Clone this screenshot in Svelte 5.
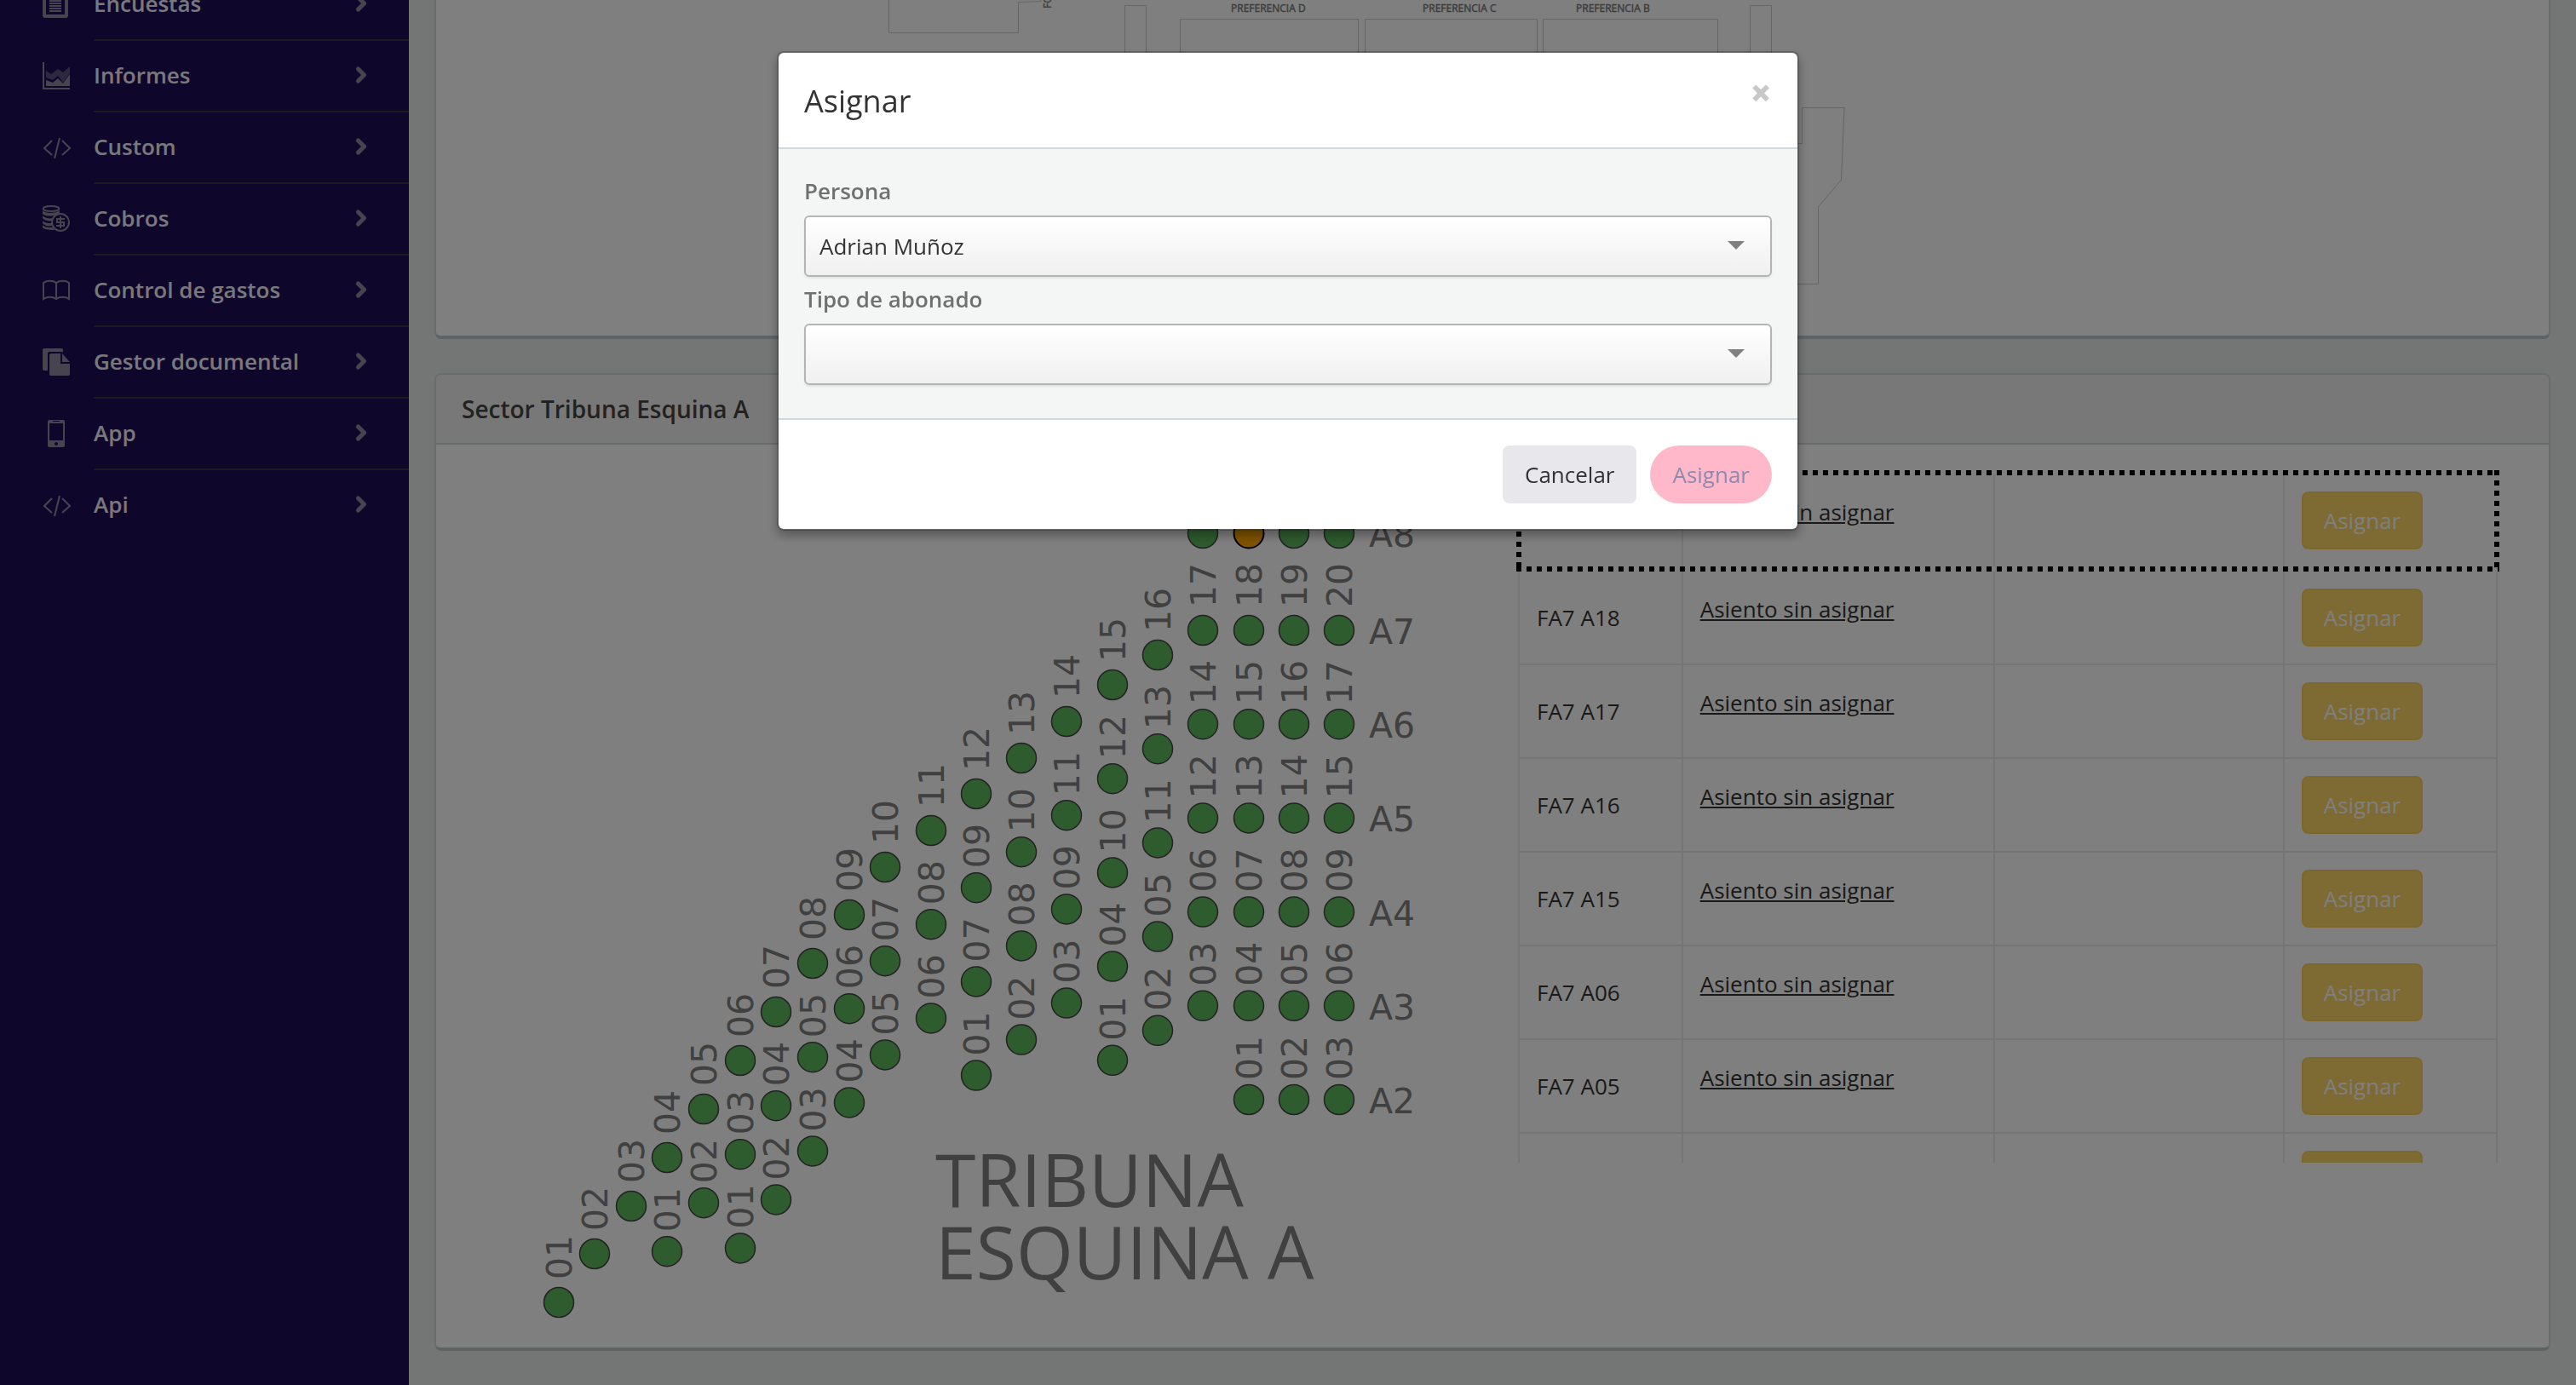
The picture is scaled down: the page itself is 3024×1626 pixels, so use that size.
<script lang="ts">
  const menu = [
    { label: "Encuestas", icon: "list" },
    { label: "Informes", icon: "chart" },
    { label: "Custom", icon: "code" },
    { label: "Cobros", icon: "coins" },
    { label: "Control de gastos", icon: "book" },
    { label: "Gestor documental", icon: "files" },
    { label: "App", icon: "phone" },
    { label: "Api", icon: "code" },
  ];

  // Each column of seats: x, y of its first seat and the numbers going down.
  const columns = [
    { x: 84, y: 977, seats: ["01"] },
    { x: 126, y: 920, seats: ["02"] },
    { x: 169, y: 864, seats: ["03"] },
    { x: 211, y: 807, seats: ["04", "01"] },
    { x: 254, y: 750, seats: ["05", "02"] },
    { x: 297, y: 693, seats: ["06", "03", "01"] },
    { x: 339, y: 636, seats: ["07", "04", "02"] },
    { x: 382, y: 579, seats: ["08", "05", "03"] },
    { x: 425, y: 522, seats: ["09", "06", "04"] },
    { x: 467, y: 466, seats: ["10", "07", "05"] },
    { x: 521, y: 423, seats: ["11", "08", "06"] },
    { x: 574, y: 380, seats: ["12", "09", "07", "01"] },
    { x: 627, y: 338, seats: ["13", "10", "08", "02"] },
    { x: 680, y: 295, seats: ["14", "11", "09", "03"] },
    { x: 734, y: 252, seats: ["15", "12", "10", "04", "01"] },
    { x: 787, y: 217, seats: ["16", "13", "11", "05", "02"] },
    { x: 840, y: 188, seats: ["17", "14", "12", "06", "03"] },
    { x: 894, y: 188, seats: ["18", "15", "13", "07", "04", "01"] },
    { x: 947, y: 188, seats: ["19", "16", "14", "08", "05", "02"] },
    { x: 1000, y: 188, seats: ["20", "17", "15", "09", "06", "03"] },
  ];
  const seatGap = 110.2;
  const lastRow = [840, 894, 947, 1000];
  const selectedX = 894;
  const rowNames = ["A7", "A6", "A5", "A4", "A3", "A2"];

  const rows = ["FA8 A04", "FA7 A18", "FA7 A17", "FA7 A16", "FA7 A15", "FA7 A06", "FA7 A05", "FA7 A04"];

  let isOpen = $state(true);
  let persona = $state("Adrian Muñoz");
  let tipo = $state("");
</script>

<div class="app">
  <nav class="sidebar">
    {#each menu as item}
      <a href="#top" class="menu-item">
        <svg class="icon" viewBox="0 0 32 32" aria-hidden="true">
          {#if item.icon === "list"}
            <rect x="2" y="2" width="26" height="28" rx="1" class="line thick" />
            <path d="M8 8h14M8 12h14M8 15h14M8 18h14M8 21h14M8 24h14" class="line" />
          {:else if item.icon === "chart"}
            <path d="M0 0h2v30h30v2H0z" />
            <path d="M4 10l6 4 8-6 6 4 8-7v8l-8 11-6-8-6 5-8-3z" opacity="0.55" />
            <path d="M4 21l8 3 6-5 6 6 8-11v14H4z" />
          {:else if item.icon === "code"}
            <path d="M11 8L2 17l9 8M23 8l9 9-9 8M20 5l-6 24" class="line" />
          {:else if item.icon === "coins"}
            <ellipse cx="10" cy="4" rx="9.3" ry="3" class="line" stroke-width="1.5" />
            <path d="M0 6c2 4 16 4 20 0v3c-4 4-16 5-20 1zM0 12c2 3 8 4 13 3l-1 3c-5 1-10 0-12-3zM0 18c2 3 7 3 11 3v3c-4 1-9 0-11-3zM0 23c2 3 7 3 12 3l2 3c-5 0-12 0-14-3z" />
            <circle cx="21" cy="20" r="10" class="line" />
            <path d="M26 16h-9v4h8v4h-9M21 13v14" class="line" />
          {:else if item.icon === "book"}
            <path d="M1 26V7c4-3 11-3 15 0 4-3 11-3 15 0v19c-4-3-11-3-15 0-4-3-11-3-15 0zM16 7v19" class="line" />
            <path d="M15 7h2v20h-2z" />
          {:else if item.icon === "files"}
            <path d="M2 0h20a2 2 0 0 1 2 2v2H8a2 2 0 0 0-2 2v20H2a2 2 0 0 1-2-2V2a2 2 0 0 1 2-2z" />
            <path d="M10 6h11v12h11v12a2 2 0 0 1-2 2H10a2 2 0 0 1-2-2V8a2 2 0 0 1 2-2z" />
            <path d="M23 6l9 10h-9z" />
          {:else}
            <path
              fill-rule="evenodd"
              d="M8 0h16a2 2 0 0 1 2 2v28a2 2 0 0 1-2 2H8a2 2 0 0 1-2-2V2a2 2 0 0 1 2-2zM8 4v20h16V4zM12 1v1h8V1zM16 26a2 2 0 1 0 .01 0z"
            />
          {/if}
        </svg>
        <span class="menu-label">{item.label}</span>
        <svg class="chevron" viewBox="0 0 14 20" aria-hidden="true">
          <path d="M4.500 3l7 7-7 7" />
        </svg>
      </a>
    {/each}
  </nav>

  <main class="content">
    <section class="panel stadium">
      <svg viewBox="0 0 2420 364" role="img" aria-label="Estadio">
        <g class="zone">
          <path d="M501.500 -4V38.500H653.500V2.500L680 1.500V-4" />
          <path d="M778.500 90V6.500H803.500V90" />
          <path d="M843.500 90V22.500H1052.500V90" />
          <path d="M1060.500 90V22.500H1262.500V90" />
          <path d="M1269.500 90V22.500H1474.500V90" />
          <path d="M1512.500 90V6.500H1537.500V90" />
          <path d="M1560 168.500H1573.500V126.500H1623L1619.500 211L1592.500 243V333.500H1560" />
        </g>
        <g class="zone-name">
          <text transform="translate(692 10) rotate(-90)">FONDO</text>
          <text x="903" y="14">PREFERENCIA D</text>
          <text x="1128" y="14">PREFERENCIA C</text>
          <text x="1308" y="14">PREFERENCIA B</text>
        </g>
      </svg>
    </section>

    <section class="panel">
      <h2 class="panel-heading">Sector Tribuna Esquina A</h2>
      <div class="panel-body">
        <div class="col">
          <svg viewBox="-2 0 1154 1000" role="img" aria-label="Tribuna Esquina A">
            {#each lastRow as x}
              <circle class="seat" class:selected={x === selectedX} cx={x} cy="74" r="17.5" />
            {/each}
            <text class="seat-row" x="1035" y="90">A8</text>
            {#each rowNames as name, i}
              <text class="seat-row" x="1035" y={204 + i * seatGap}>{name}</text>
            {/each}
            {#each columns as column}
              {#each column.seats as seat, i}
                {@const y = column.y + i * seatGap}
                <circle class="seat" cx={column.x} cy={y} r="17.5" />
                <text
                  class="seat-number"
                  transform="translate({column.x + 15} {y - (i === 0 ? 27 : 23)}) rotate(-90)"
                  >{seat}</text
                >
              {/each}
            {/each}
            <text class="sector-name" x="526" y="865">TRIBUNA</text>
            <text class="sector-name" x="526" y="950">ESQUINA A</text>
          </svg>
        </div>

        <div class="col">
          <div class="seat-list">
            <table>
              <colgroup>
                <col class="col-seat" />
                <col class="col-person" />
                <col class="col-type" />
                <col />
              </colgroup>
              <tbody>
                {#each rows as row, i}
                  <tr class:active={i === 0}>
                    <td>{row}</td>
                    <td><p><a href="#seat">Asiento sin asignar</a></p></td>
                    <td></td>
                    <td><button type="button" class="btn btn-warning">Asignar</button></td>
                  </tr>
                {/each}
              </tbody>
            </table>
            <div class="active-frame"></div>
          </div>
        </div>
      </div>
    </section>
  </main>
</div>

{#if isOpen}
  <div class="overlay">
    <div class="modal" role="dialog" aria-modal="true" aria-labelledby="modal-title">
      <div class="modal-header">
        <h4 id="modal-title">Asignar</h4>
        <button type="button" class="close" aria-label="Cerrar" onclick={() => (isOpen = false)}>×</button>
      </div>
      <div class="modal-body">
        <div class="field">
          <label for="persona">Persona</label>
          <div class="select">
            <select id="persona" bind:value={persona}>
              <option value="Adrian Muñoz">Adrian Muñoz</option>
            </select>
          </div>
        </div>
        <div class="field">
          <label for="tipo">Tipo de abonado</label>
          <div class="select">
            <select id="tipo" bind:value={tipo}>
              <option value=""></option>
            </select>
          </div>
        </div>
      </div>
      <div class="modal-footer">
        <button type="button" class="btn btn-default" onclick={() => (isOpen = false)}>Cancelar</button>
        <button type="button" class="btn btn-primary" disabled={!tipo}>Asignar</button>
      </div>
    </div>
  </div>
{/if}

<style>
  :global(body) {
    font-family: "Open Sans", "Noto Sans", sans-serif;
    font-size: 26px;
    line-height: 36px;
    color: #333;
    background: #e8ecea;
  }

  .app {
    display: flex;
    height: 100vh;
    overflow: hidden;
  }

  .sidebar {
    flex: 0 0 480px;
    margin-top: -36px;
    background: #1e0e56;
  }

  .menu-item {
    display: flex;
    align-items: center;
    height: 84px;
    padding-left: 50px;
    color: #f4f1f8;
    font-weight: 600;
    text-decoration: none;
  }

  .icon {
    flex: none;
    width: 32px;
    height: 32px;
    margin: 0 28px 2px 0;
    fill: #8f899f;
    overflow: visible;
  }

  .icon .line {
    fill: none;
    stroke: #8f899f;
    stroke-width: 2;
  }

  .icon .thick {
    stroke-width: 4;
  }

  .menu-label {
    flex: 1;
    height: 82px;
    line-height: 80px;
    border-bottom: 2px solid #363542;
  }

  .chevron {
    box-sizing: border-box;
    width: 64px;
    height: 84px;
    padding: 30px 50px 32px 0;
    border-bottom: 2px solid #363542;
    fill: none;
    stroke: #8f899f;
    stroke-width: 5;
    stroke-linecap: round;
  }

  .menu-item:last-child .menu-label,
  .menu-item:last-child .chevron {
    border-color: transparent;
  }

  .content {
    flex: 1;
    display: flex;
    flex-direction: column;
    gap: 40px;
    min-width: 0;
    padding: 0 30px 40px;
  }

  .panel {
    background: #fff;
    border: 2px solid #cfdad8;
    border-bottom: 4px solid #bcc9cd;
    border-radius: 8px;
  }

  .panel svg {
    display: block;
    width: 100%;
    height: auto;
  }

  .stadium {
    padding: 0 30px 30px;
    border-top: none;
    border-top-left-radius: 0;
    border-top-right-radius: 0;
  }

  .zone {
    fill: none;
    stroke: #ccc;
  }

  .zone-name {
    font-size: 12px;
    fill: #777;
    stroke: #777;
    stroke-width: 0.4;
  }

  .panel-heading {
    margin: 0;
    padding: 20px 30px;
    font-size: 28px;
    line-height: 40px;
    font-weight: 600;
    color: #444;
    background: #f0f0f0;
    border-bottom: 2px solid #cfdad8;
    border-radius: 6px 6px 0 0;
  }

  .panel-body {
    display: flex;
    padding: 30px;
  }

  .col {
    flex: 1;
    min-width: 0;
    padding: 0 28px;
  }

  .seat {
    fill: #5cb85c;
    stroke: #444;
    stroke-width: 1.5;
  }

  .seat.selected {
    fill: #ffa500;
    stroke: #000;
    stroke-width: 2;
  }

  .seat-number,
  .seat-row {
    font-family: "DejaVu Sans", sans-serif;
    font-size: 41px;
    fill: #808080;
  }

  .sector-name {
    font-size: 86px;
    fill: #808080;
  }

  .seat-list {
    position: relative;
    height: 50vh;
    overflow-y: auto;
    scrollbar-width: none;
  }

  table {
    width: 100%;
    table-layout: fixed;
    border-collapse: collapse;
  }

  .col-seat {
    width: 16.7%;
  }

  .col-person {
    width: 31.9%;
  }

  .col-type {
    width: 29.6%;
  }

  td {
    height: 68px;
    padding: 20px;
    border: 2px solid #ebebeb;
    vertical-align: middle;
  }

  .active {
    border: 6px solid transparent;
    border-top-width: 5px;
  }

  /* square dots round the selected seat */
  .active-frame {
    position: absolute;
    top: 0;
    left: 0;
    right: 0;
    height: 119px;
    background:
      repeating-linear-gradient(90deg, #000 0 6px, transparent 6px 12px) top / 100% 6px no-repeat,
      repeating-linear-gradient(90deg, #000 0 6px, transparent 6px 12px) bottom / 100% 6px no-repeat,
      repeating-linear-gradient(#000 0 6px, transparent 6px 12px) left / 6px 100% no-repeat,
      repeating-linear-gradient(#000 0 6px, transparent 6px 12px) right / 6px 100% no-repeat;
    pointer-events: none;
  }

  td p {
    margin: 0 0 20px;
  }

  td a {
    color: #333;
  }

  .btn {
    display: block;
    padding: 14px 24px;
    border: 2px solid transparent;
    border-radius: 8px;
    font: inherit;
    cursor: pointer;
  }

  .btn-warning {
    color: #fff;
    background: #fcd466;
    border-color: #fccf5a;
  }

  .btn-default {
    color: #333;
    background: #e8e7ec;
  }

  .btn-primary {
    color: #2a1a6e;
    background: #ff7a9b;
    border-radius: 34px;
  }

  .btn-primary:disabled {
    color: #8f89ae;
    background: #ffb8ca;
    cursor: not-allowed;
  }

  .overlay {
    position: fixed;
    inset: 0;
    background: rgba(0, 0, 0, 0.5);
  }

  .modal {
    box-sizing: border-box;
    width: 1200px;
    max-width: 90vw;
    margin: 60px auto;
    background: #fff;
    background-clip: padding-box;
    border: 2px solid rgba(0, 0, 0, 0.2);
    border-radius: 8px;
    box-shadow: 0 6px 12px rgba(0, 0, 0, 0.3);
  }

  .modal-header {
    display: flex;
    justify-content: space-between;
    align-items: flex-start;
    padding: 31px 30px 29px;
    border-bottom: 2px solid #cfdadd;
  }

  h4 {
    margin: 0;
    font-size: 36px;
    line-height: 51px;
    font-weight: 400;
  }

  .close {
    padding: 0;
    border: none;
    background: none;
    font: inherit;
    font-size: 44px;
    line-height: 30px;
    font-weight: 800;
    color: #c8c8c8;
    cursor: pointer;
  }

  .modal-body {
    padding: 31px 30px;
    background: #f4f6f5;
    border-bottom: 2px solid #cfdadd;
  }

  .field {
    padding-bottom: 8px;
  }

  label {
    display: block;
    padding-bottom: 10px;
    line-height: 37px;
    font-weight: 600;
    color: #707070;
  }

  .select {
    position: relative;
  }

  .select::after {
    content: "";
    position: absolute;
    top: 30px;
    right: 32px;
    border: 10px solid transparent;
    border-top-color: #808080;
    border-bottom: none;
    pointer-events: none;
  }

  select {
    display: block;
    width: 100%;
    height: 72px;
    padding: 0 60px 0 16px;
    appearance: none;
    border: 2px solid #b3b5b4;
    border-radius: 6px;
    background: linear-gradient(#fff, #f0f0f0);
    box-shadow: 0 2px 2px rgba(0, 0, 0, 0.08);
    font: inherit;
    color: #333;
  }

  .modal-footer {
    display: flex;
    justify-content: flex-end;
    gap: 16px;
    padding: 30px;
  }
</style>
